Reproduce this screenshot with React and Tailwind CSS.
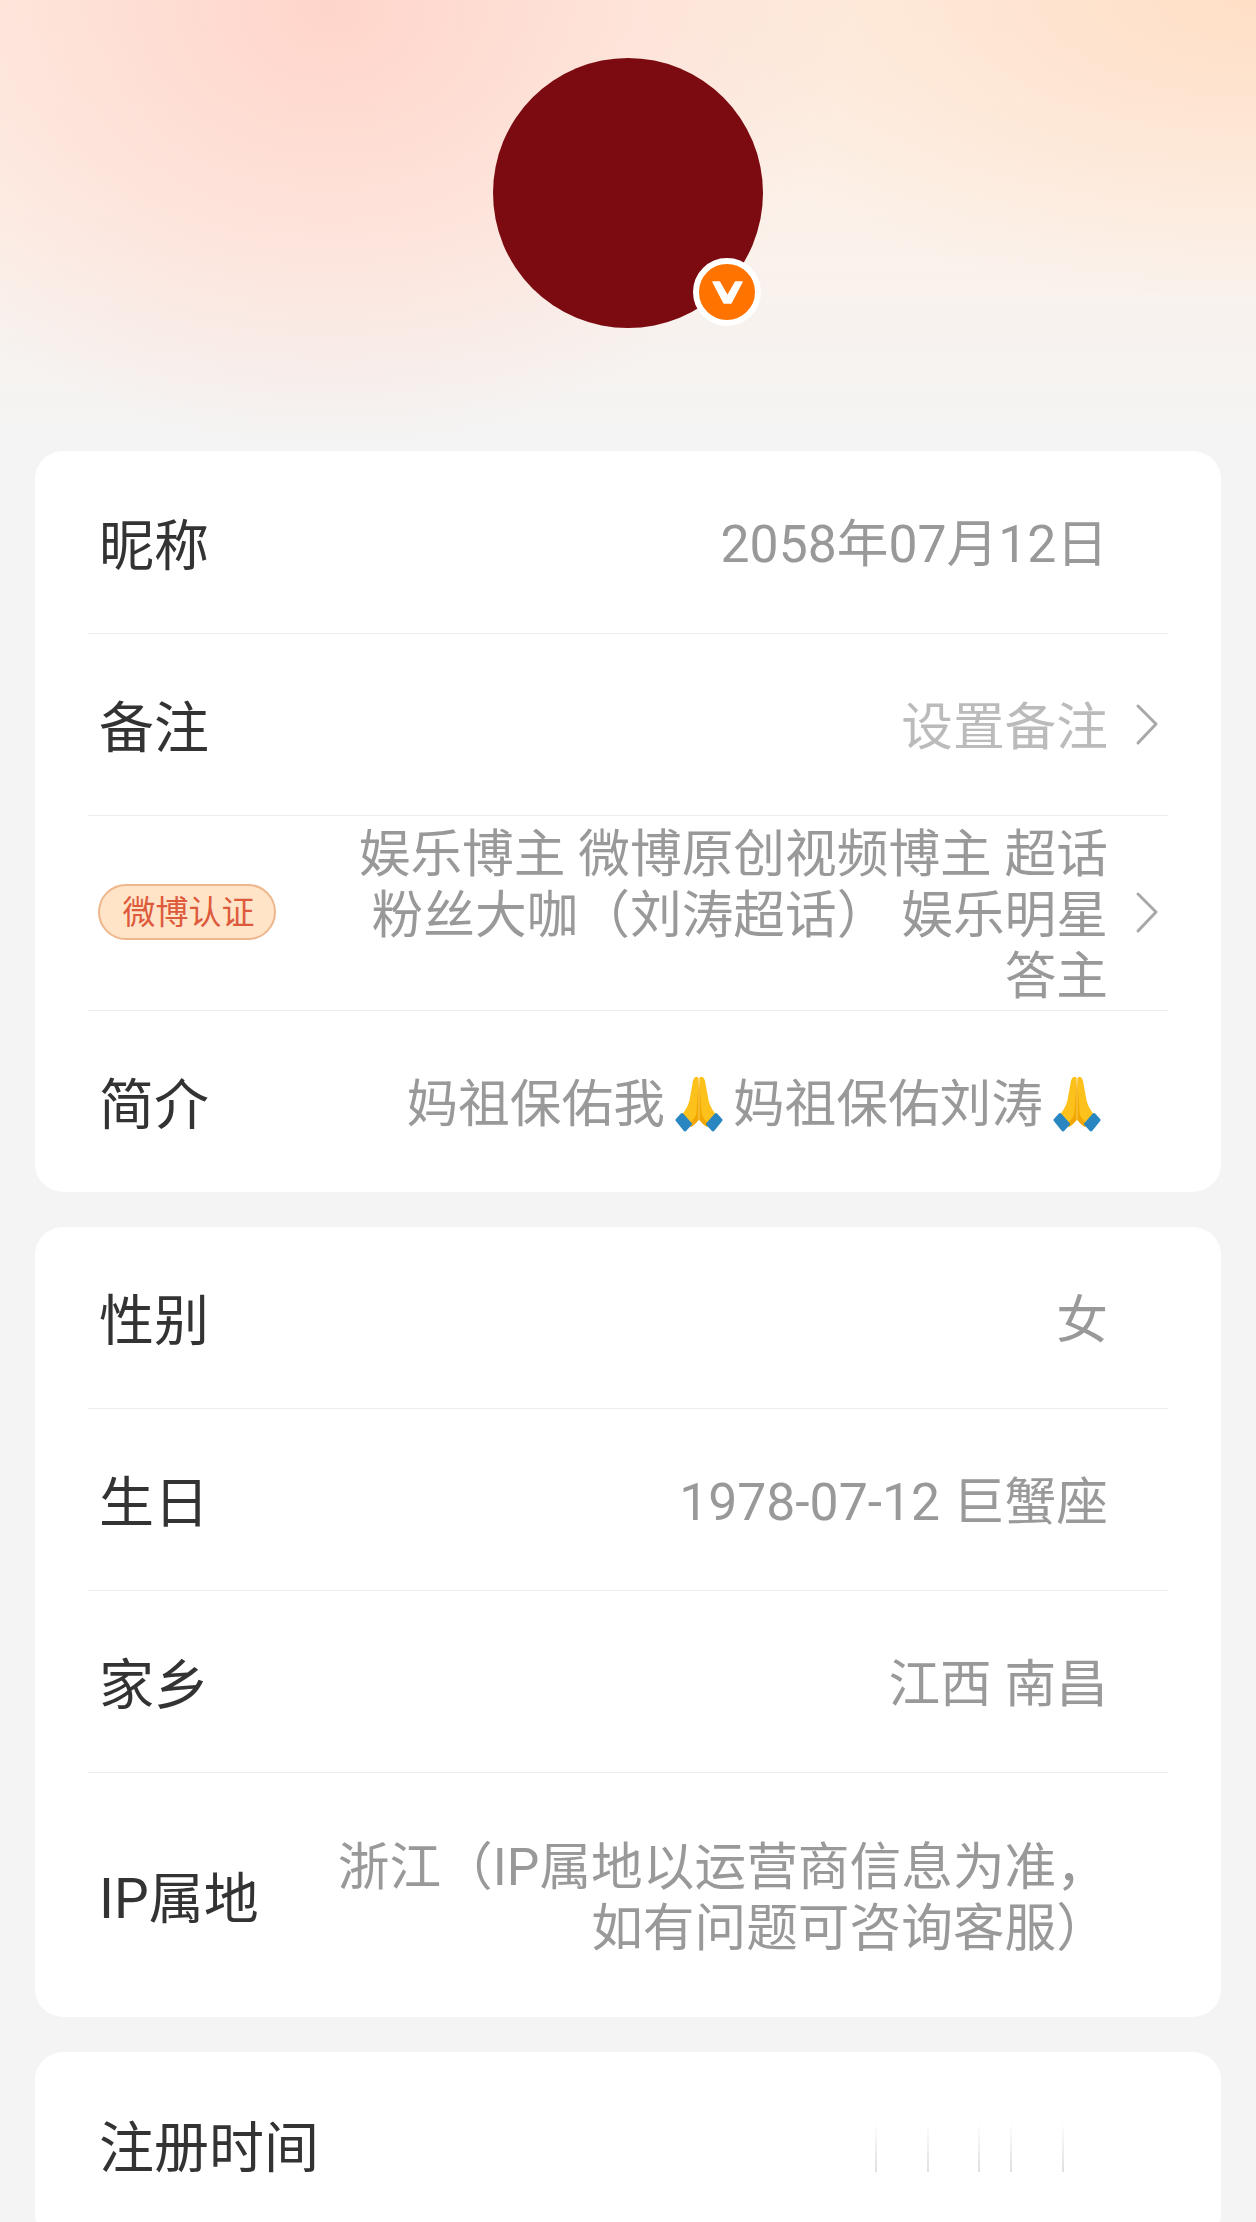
import React from "react";

function Chevron() {
  return (
    <svg width="24" height="44" viewBox="0 0 24 44" fill="none" className="absolute right-[9px] top-1/2 -translate-y-1/2">
      <path d="M3 3 L21 21 L3 40" stroke="#a8a8a8" strokeWidth="3" strokeLinecap="round" strokeLinejoin="round" />
    </svg>
  );
}

function Pray() {
  return (
    <svg width="48" height="56" viewBox="0 0 48 56" className="mx-[10px] inline-block shrink-0">
      <path d="M23.6 2 C21 -1 18 2 17.4 8 L14.5 24 C13 31 9 36 6 40 L16 51 C19 49 21 47 23.6 44 Z" fill="#fcc21b" />
      <path d="M24.4 2 C27 -1 30 2 30.6 8 L33.5 24 C35 31 39 36 42 40 L32 51 C29 49 27 47 24.4 44 Z" fill="#fcc21b" />
      <path d="M23.6 3 L23.6 44 C21 47 19 49 16 51 L14 48 C18 44 20.8 41 21.5 36 Z" fill="#f2a600" />
      <path d="M24.4 3 L24.4 44 C27 47 29 49 32 51 L34 48 C30 44 27.2 41 26.5 36 Z" fill="#f2a600" />
      <path d="M2 44 L7 38.5 L15.5 48 L10 54 Z" fill="#2a86c0" stroke="#2a86c0" strokeWidth="3" strokeLinejoin="round" />
      <path d="M46 44 L41 38.5 L32.5 48 L38 54 Z" fill="#2a86c0" stroke="#2a86c0" strokeWidth="3" strokeLinejoin="round" />
    </svg>
  );
}

function Row({ label, children, h, last, chevron, valueClass = "text-[#999999]" }) {
  return (
    <div className={`relative flex items-center justify-between ${h} ${last ? "" : "border-b border-[#ececec]"}`}>
      <div className="shrink-0 pl-[11px] pt-[8px] text-[55px] leading-none text-[#333333]">{label}</div>
      <div className={`mr-[60px] pt-[5px] text-right text-[51.7px] leading-[61px] ${valueClass}`}>{children}</div>
      {chevron && <Chevron />}
    </div>
  );
}

export default function App() {
  return (
    <div
      className="h-[2222px] overflow-hidden bg-[#f4f4f4] bg-[radial-gradient(ellipse_520px_440px_at_330px_10px,#ffd5cb_0%,#ffd5cb00_100%),radial-gradient(ellipse_620px_300px_at_1256px_0px,#ffdfc6_0%,#ffdfc600_100%),linear-gradient(to_bottom,#fdeee3_0px,#fcf1e9_200px,#f8f2ee_320px,#f4f4f4_440px)] bg-no-repeat"
      style={{ fontFamily: '"Roboto", "Noto Sans CJK SC", sans-serif' }}
    >
      <div className="flex justify-center pt-[58px] pb-[123px]">
        <div className="relative h-[270px] w-[270px] rounded-full bg-[#7b0b11]">
          <div className="absolute left-[200px] top-[200px] flex h-[68px] w-[68px] items-center justify-center rounded-full border-[6px] border-white bg-[#ff7300]">
            <svg width="33" height="25" viewBox="0 0 33 25">
              <path d="M2 2 L8.5 2 L16.5 16 L24.5 2 L31 2 L20 23 L13 23 Z" fill="#ffffff" stroke="#ffffff" strokeWidth="1.5" strokeLinejoin="round" />
            </svg>
          </div>
        </div>
      </div>

      <div className="mx-[35px] flex flex-col gap-[35px]">
        <div className="rounded-[28px] bg-white px-[53px]">
          <Row label="昵称" h="h-[183px]">2058年07月12日</Row>
          <Row label="备注" h="h-[182px]" chevron valueClass="text-[#bbbbbb]">设置备注</Row>
          <Row
            label={
              <span className="-mt-[10px] -ml-[1px] flex h-[56px] w-[178px] items-center justify-center rounded-full border-2 border-[#efb68c] bg-[#ffe4c8] pl-[3px] text-[33px] text-[#dd5b3c]">
                微博认证
              </span>
            }
            h="h-[195px]"
            chevron
          >
            娱乐博主 微博原创视频博主 超话
            <br />
            粉丝大咖（刘涛超话） 娱乐明星
            <br />
            答主
          </Row>
          <Row label="简介" h="h-[181px]" last>
            <span className="-mr-[3px] inline-flex items-center">
              妈祖保佑我
              <Pray />
              妈祖保佑刘涛
              <Pray />
            </span>
          </Row>
        </div>

        <div className="rounded-[28px] bg-white px-[53px]">
          <Row label="性别" h="h-[182px]">女</Row>
          <Row label="生日" h="h-[182px]">1978-07-12 巨蟹座</Row>
          <Row label="家乡" h="h-[182px]">江西 南昌</Row>
          <Row label="IP属地" h="h-[244px]" last>
            <div>
              浙江（IP属地以运营商信息为准，
              <br />
              如有问题可咨询客服）
            </div>
          </Row>
        </div>

        <div className="rounded-[28px] bg-white px-[53px]">
          <div className="flex h-[190px] items-center justify-between">
            <div className="pl-[11px] pt-[2px] text-[55px] leading-none text-[#333333]">注册时间</div>
            <div className="mr-[104px] flex h-[50px] gap-[50px]">
              <div className="w-[2px] bg-gradient-to-b from-white to-[#e0e0e0]" />
              <div className="w-[2px] bg-gradient-to-b from-white to-[#e0e0e0]" />
              <div className="-mx-[1px] w-[2px] bg-gradient-to-b from-white to-[#e0e0e0]" />
              <div className="-ml-[19px] w-[2px] bg-gradient-to-b from-white to-[#e0e0e0]" />
              <div className="w-[2px] bg-gradient-to-b from-white to-[#e0e0e0]" />
            </div>
          </div>
        </div>
      </div>
    </div>
  );
}
